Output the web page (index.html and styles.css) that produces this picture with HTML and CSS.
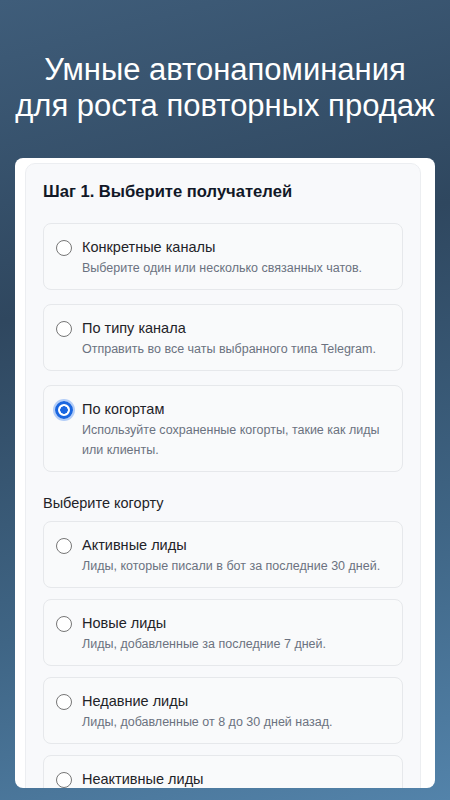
FILE: index.html
```html
<!DOCTYPE html>
<html>

<head>
    <title>Автонапоминания</title>
    <link rel="stylesheet" href="styles.css">
</head>

<body>
    <div class="hero">
        <h1>Умные автонапоминания<br>для роста повторных продаж</h1>
    </div>

    <div class="frame">
        <div class="panel">
            <h2>Шаг 1. Выберите получателей</h2>

            <div class="group">
                <label class="option">
                    <span class="radio"></span>
                    <span class="text">
                        <span class="title">Конкретные каналы</span>
                        <span class="desc">Выберите один или несколько связанных чатов.</span>
                    </span>
                </label>
                <label class="option">
                    <span class="radio"></span>
                    <span class="text">
                        <span class="title">По типу канала</span>
                        <span class="desc">Отправить во все чаты выбранного типа Telegram.</span>
                    </span>
                </label>
                <label class="option">
                    <span class="radio checked"></span>
                    <span class="text">
                        <span class="title">По когортам</span>
                        <span class="desc">Используйте сохраненные когорты, такие как лиды или клиенты.</span>
                    </span>
                </label>
            </div>

            <div class="subhead">Выберите когорту</div>

            <div class="group cohorts">
                <label class="option">
                    <span class="radio"></span>
                    <span class="text">
                        <span class="title">Активные лиды</span>
                        <span class="desc">Лиды, которые писали в бот за последние 30 дней.</span>
                    </span>
                </label>
                <label class="option">
                    <span class="radio"></span>
                    <span class="text">
                        <span class="title">Новые лиды</span>
                        <span class="desc">Лиды, добавленные за последние 7 дней.</span>
                    </span>
                </label>
                <label class="option">
                    <span class="radio"></span>
                    <span class="text">
                        <span class="title">Недавние лиды</span>
                        <span class="desc">Лиды, добавленные от 8 до 30 дней назад.</span>
                    </span>
                </label>
                <label class="option">
                    <span class="radio"></span>
                    <span class="text">
                        <span class="title">Неактивные лиды</span>
                    </span>
                </label>
            </div>
        </div>
    </div>
</body>

</html>
```

FILE: styles.css
```css
body {
    margin: 0;
    width: 450px;
    height: 800px;
    overflow: hidden;
    font-family: "Liberation Sans", Arial, sans-serif;
    background: linear-gradient(165deg, #3f5d7a 0%, #2f475f 35%, #3f6585 70%, #5383aa 100%);
}

.hero h1 {
    margin: 0;
    padding-top: 52px;
    color: #fff;
    font-size: 31px;
    font-weight: normal;
    line-height: 36px;
    text-align: center;
}

.frame {
    margin: 34px 15px 0;
    height: 630px;
    padding: 5px 14px 0 10px;
    box-sizing: border-box;
    background: #fff;
    border-radius: 8px;
    overflow: hidden;
}

.panel {
    background: #f8f9fb;
    border: 1px solid #eceef1;
    border-radius: 10px;
    padding: 17px 17px;
}

.panel h2 {
    margin: 0 0 20px;
    font-size: 16.6px;
    line-height: 22px;
    color: #111827;
}

.group {
    display: flex;
    flex-direction: column;
    gap: 14px;
}

.group.cohorts {
    gap: 11px;
}

.option {
    display: flex;
    gap: 10px;
    padding: 13px 16px 11px 12px;
    background: #f9fafb;
    border: 1px solid #e6e8eb;
    border-radius: 8px;
}

.radio {
    flex: none;
    width: 16px;
    height: 16px;
    margin-top: 3px;
    box-sizing: border-box;
    border: 1.5px solid #767676;
    border-radius: 50%;
    background: #fff;
}

/* selected: thick blue ring, white gap, blue dot and a soft focus halo */
.radio.checked {
    width: 18px;
    height: 18px;
    margin: 2px -1px 0;
    border: 3px solid #1a66e0;
    background: radial-gradient(circle, #1a66e0 0 3.5px, #fff 4px);
    box-shadow: 0 0 0 2px #b3cdf7;
}

.text {
    display: flex;
    flex-direction: column;
    gap: 1px;
}

.title {
    font-size: 14.5px;
    line-height: 20px;
    color: #1f2328;
}

.desc {
    font-size: 12.5px;
    line-height: 20px;
    color: #6b7280;
}

.subhead {
    margin: 21px 0 8px;
    font-size: 14.5px;
    line-height: 20px;
    color: #1f2328;
}
```
